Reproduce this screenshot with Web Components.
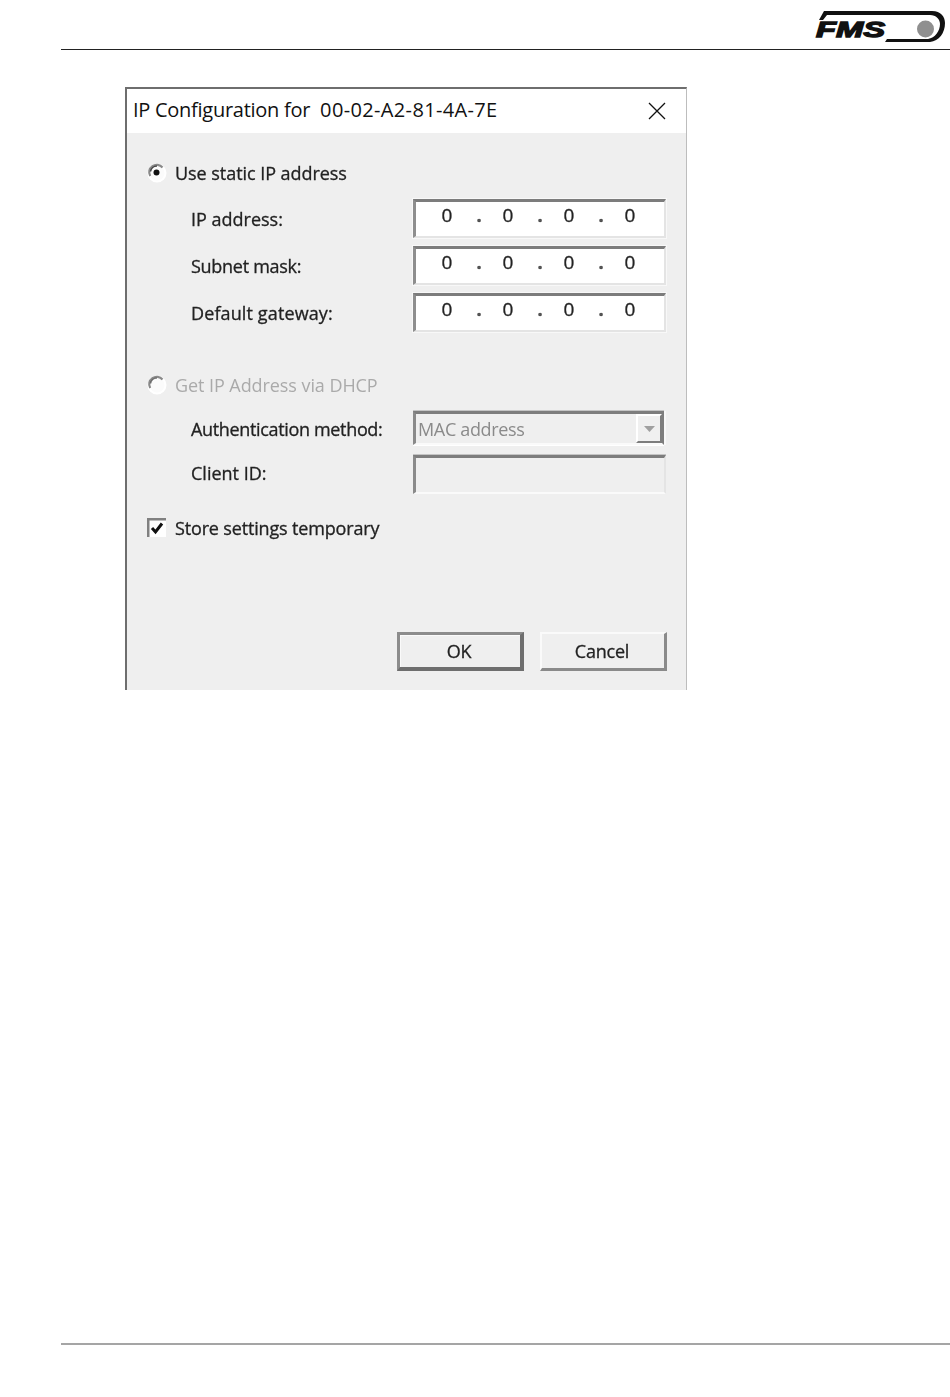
<!DOCTYPE html>
<html><head><meta charset="utf-8"><title>IP Configuration</title>
<style>
html,body{margin:0;padding:0;background:#fff}
body{font-family:"Open Sans","Liberation Sans",sans-serif;color:#222}
</style></head><body>
<fms-page>
  <fms-header slot="header"></fms-header>
  <ip-dialog label-text="IP Configuration for" mac-text="00-02-A2-81-4A-7E">
    <dlg-option type="radio" checked style="letter-spacing:-.05px">Use static IP address</dlg-option>
    <dlg-row label="IP address:" pad="8" style="margin-top:13px;letter-spacing:0"><ip-input></ip-input></dlg-row>
    <dlg-row label="Subnet mask:" pad="8" style="margin-top:8px;letter-spacing:-.28px"><ip-input></ip-input></dlg-row>
    <dlg-row label="Default gateway:" pad="8" style="margin-top:8px;letter-spacing:.12px"><ip-input></ip-input></dlg-row>
    <dlg-option type="radio" disabled style="margin-top:40px;letter-spacing:-.07px">Get IP Address via DHCP</dlg-option>
    <dlg-row label="Authentication method:" pad="6" style="margin-top:13px;letter-spacing:-.34px"><dlg-combo>MAC address</dlg-combo></dlg-row>
    <dlg-row label="Client ID:" pad="6" style="margin-top:9px;letter-spacing:0"><dlg-text></dlg-text></dlg-row>
    <dlg-option type="check" checked style="margin-top:21px;letter-spacing:-.16px">Store settings temporary</dlg-option>
    <dlg-buttons style="margin-top:91px">
      <dlg-button default>OK</dlg-button>
      <dlg-button>Cancel</dlg-button>
    </dlg-buttons>
  </ip-dialog>
  <fms-footer></fms-footer>
</fms-page>
<script>
function def(name, css, html){
  customElements.define(name, class extends HTMLElement{
    constructor(){super();const r=this.attachShadow({mode:'open'});
      r.innerHTML='<style>'+css+'</style>'+(typeof html==='function'?html(this):html);}
  });
}
const FONT='font-family:"Open Sans","Liberation Sans",sans-serif;font-size:18px;letter-spacing:-.2px;-webkit-text-stroke:.3px currentColor;';
def('fms-page',':host{display:flex;flex-direction:column;width:950px;height:1397px;overflow:hidden}','<slot name="header"></slot><slot></slot>');
def('fms-header',
 ':host{display:flex;justify-content:flex-end;box-sizing:border-box;height:50px;margin-left:61px;border-bottom:1px solid #222;position:relative}'
 +'svg{position:absolute;right:0;top:0}'
 +'text{font-family:"Liberation Sans",sans-serif;font-weight:700;font-style:italic;font-size:22px;fill:#111;stroke:#111;stroke-width:1.3}',
 `<svg width="140" height="48" viewBox="0 0 140 48">
   <path d="M9 20 L14 11 H122 C131 11 135 17 135 23 C135 33 129 41 120 42 H75 L77 39 H118 C125 38 130 31 130 24 C130 19 126 15 120 15 H17 L13 20 Z" fill="#111"/>
   <circle cx="115.500" cy="29" r="8.500" fill="#8f8f8f"/>
   <text x="6" y="37" textLength="69" lengthAdjust="spacingAndGlyphs">FMS</text>
 </svg>`);
def('fms-footer',':host{display:block;height:2px;margin:auto 0 0 61px;background:#a5a5a5;position:relative;top:-52px}','');
def('ip-dialog',
 ':host{display:block;box-sizing:border-box;width:562px;margin:37px 0 0 125px;border-left:2px solid #6e6e6e;border-top:2px solid #6e6e6e;border-right:1px solid #bdbdbd;'+FONT+'color:#222}'
 +'.t{display:flex;align-items:center;height:44px;background:#fff;padding:0 20px 0 6px;font-size:20px;color:#111;white-space:nowrap;-webkit-text-stroke:0}'
 +'.t span{position:relative;top:-1.5px}.t .n{letter-spacing:-.27px}.t .m{letter-spacing:.35px;margin-left:10px;margin-right:auto}'
 +'.b{display:flex;flex-direction:column;background:#efefef;padding:27px 19px 19px 20px;height:557px;box-sizing:border-box;filter:blur(.35px)}'
 +'svg{display:block}',
 h=>`<div class="t"><span class="n">${h.getAttribute('label-text')}</span><span class="m">${h.getAttribute('mac-text')}</span><svg width="18" height="18" viewBox="0 0 18 18"><path d="M1 1 L17 17 M17 1 L1 17" stroke="#111" stroke-width="1.3" fill="none"/></svg></div><div class="b"><slot></slot></div>`);
def('dlg-option',
 ':host{display:flex;align-items:center;height:26px;gap:8px;white-space:nowrap}:host([disabled]){color:#aaa;-webkit-text-stroke:0}svg{display:block;flex:none}',
 h=>{
  const t=h.getAttribute('type'),c=h.hasAttribute('checked'),dis=h.hasAttribute('disabled');
  const icon=t==='radio'
   ?`<svg width="20" height="20" viewBox="0 0 20 20"><circle cx="10" cy="10" r="8.5" fill="#fbfbfb" stroke="#fff" stroke-width="2"/><path d="M3.2 13 A7.5 7.5 0 0 1 15.500 4.500" fill="none" stroke="#8a8a8a" stroke-width="2.2"/><path d="M3.500 8.500 A6.500 6.500 0 0 1 10 3" fill="none" stroke="#444" stroke-width="1.6" opacity="${dis?.7:1}"/>${c?'<circle cx="9.500" cy="9.500" r="3" fill="#111"/>':''}</svg>`
   :`<svg width="20" height="20" viewBox="0 0 20 20"><rect x="1" y="1" width="18" height="18" fill="#fff"/><path d="M1 19 V1 H19" fill="none" stroke="#808080" stroke-width="3"/><path d="M5 10 L8.500 14 L15 5.500" fill="none" stroke="#111" stroke-width="3"/></svg>`;
  return icon+'<slot></slot>';
 });
def('dlg-row',
 ':host{display:flex;align-items:flex-start;padding-left:44px;height:auto}.l{width:222px;flex:none;white-space:nowrap}',
 h=>`<div class="l" style="padding-top:${h.getAttribute('pad')}px">${h.getAttribute('label')}</div><slot></slot>`);
const bevel='box-sizing:border-box;border-style:solid;border-width:3px 2px 2px 3px;';
def('ip-input',
 ':host{display:flex;width:253px;'+bevel+'height:39px;background:#fff;border-color:#7c7c7c #e4e4e4 #e4e4e4 #8e8e8e;box-shadow:0 0 0 1px #f8f8f8,0 -1px 0 #b4b4b4;padding-left:21px;font-size:19px;line-height:27px;letter-spacing:0;-webkit-text-stroke:.35px #333}'
 +'span{display:block;text-align:center}.d{width:20px}.p{width:41px;padding-left:3px;box-sizing:border-box;font-size:18px;font-weight:700;color:#555}',
 '<span class="d">0</span><span class="p">.</span><span class="d">0</span><span class="p">.</span><span class="d">0</span><span class="p">.</span><span class="d">0</span>');
def('dlg-combo',
 ':host{display:flex;justify-content:space-between;align-items:center;width:251px;margin-right:2px;'+bevel+'height:34px;margin-bottom:1px;background:#efefef;border-color:#7d7d7d #7d7d7d #fafafa #8a8a8a;box-shadow:0 -1px 0 #c4c4c4,2px 0 0 #f8f8f8,0 1px 0 #fff;color:#8a8a8a;padding-left:2px;white-space:nowrap;-webkit-text-stroke:0}'
 +'.a{box-sizing:border-box;width:26px;height:29px;background:#f0f0f0;border-style:solid;border-width:2px;border-color:#fff #7d7d7d #7d7d7d #fff;display:flex;align-items:center;justify-content:center}svg{display:block}',
 '<slot></slot><div class="a"><svg width="11" height="6" viewBox="0 0 11 6"><path d="M0 0 H11 L5.500 6 Z" fill="#a0a0a0"/></svg></div>');
def('dlg-text',':host{display:block;width:253px;'+bevel+'height:39px;background:#efefef;border-color:#7d7d7d #e4e4e4 #fafafa #8a8a8a;box-shadow:0 -1px 0 #c4c4c4}','');
def('dlg-buttons',':host{display:flex;justify-content:flex-end;gap:16px}','<slot></slot>');
def('dlg-button',
 ':host{display:flex;align-items:center;justify-content:center;box-sizing:border-box;width:127px;height:39px;background:#efefef;border-style:solid;border-width:2px 3px 3px 2px;border-color:#fafafa #8a8a8a #8a8a8a #fafafa;color:#222;white-space:nowrap;padding-right:2px}'
 +':host([default]){border-width:3px 4px 4px 3px;border-color:#8c8c8c #6e6e6e #6e6e6e #8c8c8c;box-shadow:inset 1px 1px 0 #fafafa}',
 '<slot></slot>');
</script>
</body></html>
